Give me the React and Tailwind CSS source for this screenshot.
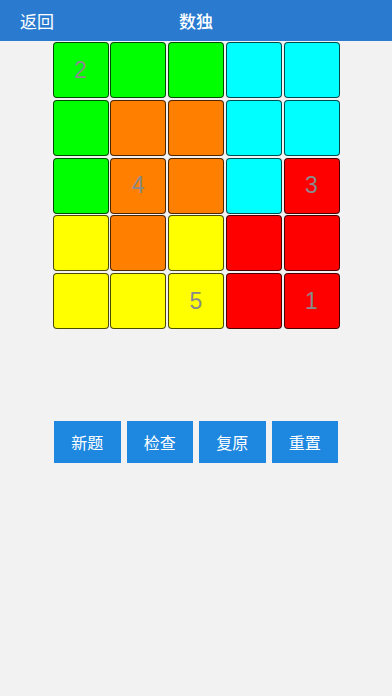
const font = { fontFamily: '"Noto Sans CJK SC", "Liberation Sans", sans-serif' }

const G = 'bg-[#00ff00]'
const C = 'bg-[#00ffff]'
const O = 'bg-[#ff8000]'
const R = 'bg-[#ff0000]'
const Y = 'bg-[#ffff00]'

const cells = [
  [G, '2'], [G, ''], [G, ''], [C, ''], [C, ''],
  [G, ''], [O, ''], [O, ''], [C, ''], [C, ''],
  [G, ''], [O, '4'], [O, ''], [C, ''], [R, '3'],
  [Y, ''], [O, ''], [Y, ''], [R, ''], [R, ''],
  [Y, ''], [Y, ''], [Y, '5'], [R, ''], [R, '1'],
]

const buttons = ['新题', '检查', '复原', '重置']

export default function App() {
  return (
    <div className="w-[392px] h-[696px] bg-[#f2f2f2] flex flex-col" style={font}>
      {/* Header */}
      <div className="relative h-[41px] bg-[#2a7bd0] flex items-center justify-center text-white">
        <span className="absolute left-[20px] text-[17px]">返回</span>
        <span className="text-[17px] font-medium">数独</span>
      </div>

      {/* Board */}
      <div className="flex justify-center pt-[1px]">
        <div className="grid grid-cols-[repeat(5,56px)] gap-[1.75px]">
          {cells.map(([bg, n], i) => (
            <div
              key={i}
              className={`${bg} h-[56px] rounded-[4px] border border-black/70 flex items-center justify-center text-[23px] text-[#8a8a8a]`}
              style={{ fontFamily: '"Liberation Sans", sans-serif' }}
            >
              {n}
            </div>
          ))}
        </div>
      </div>

      {/* Buttons */}
      <div className="flex justify-center gap-[6px] mt-[92px]">
        {buttons.map((b) => (
          <button
            key={b}
            className="w-[66.5px] h-[42px] bg-[#1e88e0] text-white text-[16px]"
          >
            {b}
          </button>
        ))}
      </div>
    </div>
  )
}
